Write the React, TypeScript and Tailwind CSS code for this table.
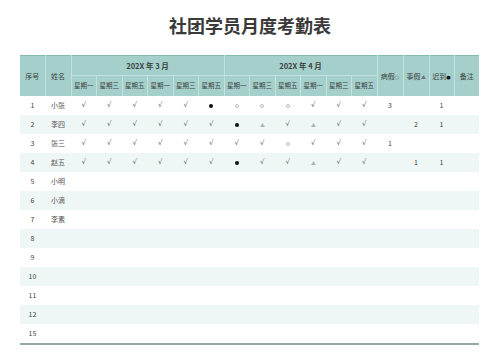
import React from "react";

const F = { fontFamily: '"Noto Sans CJK SC", "Noto Sans", sans-serif' };
const L = { fontFamily: '"DejaVu Sans", "Liberation Sans", sans-serif' };

const days = ["星期一", "星期三", "星期五", "星期一", "星期三", "星期五"];

type Row = { no: string; name: string; marks: string[]; sick: string; leave: string; late: string };

const C = "√";
const rows: Row[] = [
  { no: "1", name: "小张", marks: [C, C, C, C, C, "●", "○", "○", "○", C, C, C], sick: "3", leave: "", late: "1" },
  { no: "2", name: "李四", marks: [C, C, C, C, C, C, "●", "△", C, "△", C, C], sick: "", leave: "2", late: "1" },
  { no: "3", name: "张三", marks: [C, C, C, C, C, C, C, C, "○", C, C, C], sick: "1", leave: "", late: "" },
  { no: "4", name: "赵五", marks: [C, C, C, C, C, C, "●", C, C, "△", C, C], sick: "", leave: "1", late: "1" },
  { no: "5", name: "小明", marks: [], sick: "", leave: "", late: "" },
  { no: "6", name: "小滴", marks: [], sick: "", leave: "", late: "" },
  { no: "7", name: "李素", marks: [], sick: "", leave: "", late: "" },
  { no: "8", name: "", marks: [], sick: "", leave: "", late: "" },
  { no: "9", name: "", marks: [], sick: "", leave: "", late: "" },
  { no: "10", name: "", marks: [], sick: "", leave: "", late: "" },
  { no: "11", name: "", marks: [], sick: "", leave: "", late: "" },
  { no: "12", name: "", marks: [], sick: "", leave: "", late: "" },
  { no: "15", name: "", marks: [], sick: "", leave: "", late: "" },
];

function Tri({ c }: { c: string }) {
  return (
    <svg width="5" height="4" viewBox="0 0 5 4" className="inline-block align-middle">
      <polygon points="2.5,0 5,4 0,4" fill={c} />
    </svg>
  );
}

function Mark({ m }: { m: string }) {
  if (m === "●") return <span className="inline-block w-[4px] h-[4px] rounded-full bg-[#111]" />;
  if (m === "○") return <span className="inline-block w-[4px] h-[4px] rounded-full border border-[#bbb]" />;
  if (m === "△") return <Tri c="#b5b5b5" />;
  return <span className="text-[7px] text-[#666]" style={L}>{m}</span>;
}

export default function App() {
  return (
    <div className="w-[500px] h-[354px] bg-white overflow-hidden" style={F}>
      <div className="h-[55px] flex items-start justify-center pt-[14px]">
        <h1 className="text-[18px] leading-[22px] font-bold text-[#3a3a3a]">社团学员月度考勤表</h1>
      </div>
      <div className="px-[20px]">
        <table className="table-fixed border-collapse w-[459px] text-[7px] text-[#444]">
          <colgroup>
            <col className="w-[25px]" />
            <col className="w-[26px]" />
            {Array.from({ length: 12 }).map((_, i) => (
              <col key={i} className="w-[25.5px]" />
            ))}
            <col className="w-[26px]" />
            <col className="w-[26px]" />
            <col className="w-[25px]" />
            <col className="w-[25px]" />
          </colgroup>
          <thead className="bg-[#a5cfca] text-[#3b4644]">
            <tr className="h-[20px] border-t border-[#86b9b3]">
              <th rowSpan={2} className="font-normal border-r border-[#c3e0dc]">序号</th>
              <th rowSpan={2} className="font-normal border-r border-[#c3e0dc]">姓名</th>
              <th colSpan={6} className="font-bold text-[7.5px] border-r border-b border-[#c3e0dc]">202X 年 3 月</th>
              <th colSpan={6} className="font-bold text-[7.5px] border-r border-b border-[#c3e0dc]">202X 年 4 月</th>
              <th rowSpan={2} className="font-normal border-r border-[#c3e0dc]">
                病假<span className="text-[5px] text-[#666]" style={L}>○</span>
              </th>
              <th rowSpan={2} className="font-normal border-r border-[#c3e0dc]">
                事假<Tri c="#777" />
              </th>
              <th rowSpan={2} className="font-normal border-r border-[#c3e0dc]">
                迟到<span className="text-[5px] text-[#111]" style={L}>●</span>
              </th>
              <th rowSpan={2} className="font-normal">备注</th>
            </tr>
            <tr className="h-[20px]">
              {[...days, ...days].map((d, i) => (
                <th key={i} className="font-normal text-[6.5px] border-r border-[#c3e0dc] whitespace-nowrap">
                  {d}
                </th>
              ))}
            </tr>
          </thead>
          <tbody>
            {rows.map((r, i) => (
              <tr key={i} className={`h-[19px] ${i % 2 === 1 ? "bg-[#eef7f6]" : "bg-white"}`}>
                <td className="text-center text-[#444]">{r.no}</td>
                <td className="text-center text-[#555]">{r.name}</td>
                {Array.from({ length: 12 }).map((_, j) => (
                  <td key={j} className="text-center leading-none">
                    {r.marks[j] ? <Mark m={r.marks[j]} /> : null}
                  </td>
                ))}
                <td className="text-center">{r.sick}</td>
                <td className="text-center">{r.leave}</td>
                <td className="text-center">{r.late}</td>
                <td></td>
              </tr>
            ))}
          </tbody>
        </table>
        <div className="w-[459px] h-[2px] bg-[#8fae9f]" />
      </div>
    </div>
  );
}
